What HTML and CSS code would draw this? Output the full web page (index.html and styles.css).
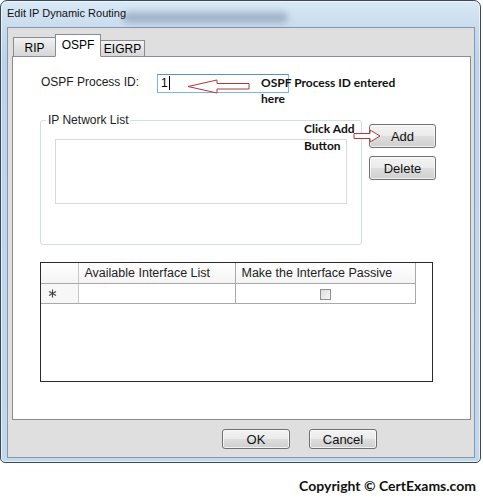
FILE: index.html
```html
<!DOCTYPE html>
<html lang="en">
<head>
    <meta charset="UTF-8">
    <title>Edit IP Dynamic Routing</title>
    <link rel="stylesheet" href="styles.css">
</head>
<body>

<div class="window">
    <div class="titlebar">
        <span class="title">Edit IP Dynamic Routing</span>
        <span class="title-smudge"></span>
    </div>

    <div class="client">
        <!-- Tabs -->
        <div class="tabs">
            <div class="tab">RIP</div>
            <div class="tab active">OSPF</div>
            <div class="tab short">EIGRP</div>
        </div>

        <div class="panel">
            <!-- Process ID -->
            <div class="process-row">
                <label class="field-label">OSPF Process ID:</label>
                <div class="textbox">1<span class="caret"></span></div>
                <svg class="note-arrow arrow-left" width="64" height="15" viewBox="0 0 64 15">
                    <path d="M1 7.5 L30 1 L30 4.5 L62 4.5 L62 10 L30 10 L30 14 Z" fill="#fff" stroke="#b0383a" stroke-width="1"/>
                </svg>
                <div class="note note-process">OSPF Process ID entered<br>here</div>
            </div>

            <!-- Network list -->
            <div class="network-row">
                <fieldset class="group">
                    <legend>IP Network List</legend>
                    <div class="listbox"></div>
                </fieldset>
                <div class="side-buttons">
                    <button class="btn">Add</button>
                    <button class="btn">Delete</button>
                </div>
                <div class="note note-add">Click Add<br>Button</div>
                <svg class="note-arrow arrow-right" width="28" height="14" viewBox="0 0 28 14">
                    <path d="M1 4.5 L17 4.5 L17 1 L27 7 L17 13 L17 9.5 L1 9.5 Z" fill="#fff" stroke="#b0383a" stroke-width="1"/>
                </svg>
            </div>

            <!-- Interface grid -->
            <div class="grid">
                <table>
                    <colgroup>
                        <col class="c-row">
                        <col class="c-a">
                        <col class="c-b">
                    </colgroup>
                    <tr class="head">
                        <th class="rowhead"></th>
                        <th>Available Interface List</th>
                        <th>Make the Interface Passive</th>
                    </tr>
                    <tr>
                        <td class="rowhead star">
                            <svg width="9" height="9" viewBox="0 0 9 9">
                                <path d="M4.5 0.5 V8.5 M1 2.5 L8 6.5 M1 6.5 L8 2.5" stroke="#444" stroke-width="1.1"/>
                            </svg>
                        </td>
                        <td></td>
                        <td class="check-cell"><span class="checkbox"></span></td>
                    </tr>
                </table>
            </div>
        </div>

        <div class="footer">
            <button class="btn">OK</button>
            <button class="btn">Cancel</button>
        </div>
    </div>
</div>

<div class="copyright">Copyright &copy; CertExams.com</div>

</body>
</html>
```

FILE: styles.css
```css
body {
    margin: 0;
    padding: 0;
    background: #fff;
    font-family: 'Liberation Sans', Arial, sans-serif;
    font-size: 12px;
    color: #000;
    width: 483px;
}

.window {
    box-sizing: border-box;
    width: 481px;
    height: 463px;
    border: 1px solid #39495a;
    border-radius: 7px 7px 5px 5px;
    background: linear-gradient(to bottom, #d8e8f6 0px, #c9dcee 26px, #bcd3ea 60px, #c2d8ec 100%);
    display: flex;
    flex-direction: column;
    box-shadow: inset 0 0 0 1px rgba(255, 255, 255, 0.6);
}

.titlebar {
    height: 26px;
    position: relative;
    flex-shrink: 0;
}

.title {
    display: block;
    padding: 6px 0 0 6px;
    font-family: 'Liberation Sans', Arial, sans-serif;
    font-size: 11px;
    color: #111;
    position: relative;
    z-index: 1;
}

.title-smudge {
    position: absolute;
    left: 122px;
    top: 11px;
    width: 165px;
    height: 11px;
    border-radius: 6px;
    background: rgba(60, 80, 110, 0.3);
    filter: blur(3px);
}

.client {
    flex: 1;
    margin: 0 5px 4px 6px;
    border: 1px solid #8497ab;
    background: #dfdfdf;
    display: flex;
    flex-direction: column;
}

/* Tabs */
.tabs {
    height: 28px;
    display: flex;
    align-items: flex-end;
    padding-left: 5px;
    flex-shrink: 0;
}

.tab {
    box-sizing: border-box;
    height: 19px;
    padding-top: 3px;
    border: 1px solid #898c95;
    border-bottom: none;
    background: linear-gradient(to bottom, #f2f2f2, #e3e3e3 50%, #d6d6d6);
    text-align: center;
    font-size: 12px;
    width: 43px;
}

.tab.active {
    width: 46px;
    height: 23px;
    background: #fff;
    margin-bottom: -1px;
    position: relative;
    z-index: 1;
    border-bottom: 1px solid #fff;
    margin-left: -1px;
}

.tab.short {
    width: 45px;
    height: 16px;
    padding-top: 1px;
    margin-left: -1px;
}

.panel {
    box-sizing: border-box;
    height: 364px;
    margin: 0 3px 0 4px;
    border: 1px solid #898c95;
    background: #fff;
    padding: 17px 0 0 27px;
    flex-shrink: 0;
}

/* Process ID row */
.process-row {
    position: relative;
    display: flex;
    align-items: center;
    height: 19px;
}

.field-label {
    width: 116px;
    margin-left: 1px;
    margin-top: -3px;
    color: #1a1a1a;
}

.textbox {
    box-sizing: border-box;
    width: 132px;
    height: 19px;
    border: 1px solid #7eb4ea;
    border-top-color: #5a8fc4;
    padding: 1px 0 0 3px;
    font-size: 12px;
}

.caret {
    display: inline-block;
    width: 1px;
    height: 14px;
    background: #000;
    vertical-align: -3px;
    margin-left: 1px;
}

.note {
    position: absolute;
    font-family: Lato, 'Open Sans', sans-serif;
    font-weight: bold;
    font-size: 12px;
    line-height: 16px;
    color: #111;
}

.note-arrow {
    position: absolute;
}

.arrow-left {
    left: 147px;
    top: 5px;
}

.note-process {
    left: 221px;
    top: 1px;
}

/* Network list */
.network-row {
    position: relative;
    display: flex;
    margin-top: 20px;
}

.group {
    box-sizing: border-box;
    width: 321px;
    height: 132px;
    margin: 0;
    padding: 0 14px;
    border: 1px solid #d5dde4;
    border-radius: 3px;
}

.group legend {
    padding: 0 2px;
    margin-left: -9px;
    line-height: 14px;
    font-size: 12px;
    color: #222;
}

.listbox {
    box-sizing: border-box;
    width: 292px;
    height: 65px;
    margin-top: 12px;
    border: 1px solid #d6dadf;
    background: #fff;
}

.side-buttons {
    display: flex;
    flex-direction: column;
    gap: 8px;
    margin: 11px 0 0 7px;
}

.btn {
    box-sizing: border-box;
    width: 67px;
    height: 24px;
    border: 1px solid #707070;
    border-radius: 3px;
    background: linear-gradient(to bottom, #f3f3f3, #ebebeb 48%, #dddddd 52%, #cfcfcf);
    font-family: 'Liberation Sans', Arial, sans-serif;
    font-size: 13px;
    color: #111;
    padding: 0;
    box-shadow: inset 0 0 0 1px rgba(255, 255, 255, 0.7);
}

.note-add {
    left: 264px;
    top: 7px;
    line-height: 17px;
}

.arrow-right {
    left: 313px;
    top: 16px;
}

/* Grid */
.grid {
    box-sizing: border-box;
    width: 393px;
    height: 120px;
    margin-top: 17px;
    border: 1px solid #2a2a2a;
    background: #fff;
}

.grid table {
    border-collapse: collapse;
    table-layout: fixed;
    width: 374px;
}

.grid col.c-row {
    width: 37px;
}

.grid col.c-a {
    width: 157px;
}

.grid col.c-b {
    width: 180px;
}

.grid th,
.grid td {
    padding: 0;
    border: 1px solid #a9a9a9;
    font-weight: normal;
    font-size: 12.5px;
    color: #222;
}

.grid tr.head th {
    height: 20px;
    border-top: none;
    text-align: left;
    padding-left: 6px;
    background: linear-gradient(to bottom, #ffffff, #f4f4f4);
}

.grid tr td {
    height: 19px;
}

.grid .rowhead {
    border-left: none;
    background: #f7f7f7;
    border-right-color: #c8c8c8;
}

.grid tr.head th.rowhead {
    padding-left: 0;
}

.star {
    text-align: left;
    padding-left: 7px !important;
    line-height: 0;
}

.check-cell {
    text-align: center;
}

.checkbox {
    display: inline-block;
    width: 9px;
    height: 9px;
    border: 1px solid #8e8f8f;
    background: linear-gradient(135deg, #dcdcdc, #f6f6f6);
    vertical-align: middle;
}

/* Footer */
.footer {
    flex: 1;
    display: flex;
    justify-content: flex-end;
    align-items: flex-start;
    gap: 19px;
    padding: 9px 97px 0 0;
}

.footer .btn {
    width: 68px;
    height: 20px;
    font-size: 13px;
}

.copyright {
    margin-top: 14px;
    padding-right: 7px;
    text-align: right;
    font-family: Lato, 'Open Sans', sans-serif;
    font-weight: bold;
    font-size: 14px;
    color: #111;
}
```
